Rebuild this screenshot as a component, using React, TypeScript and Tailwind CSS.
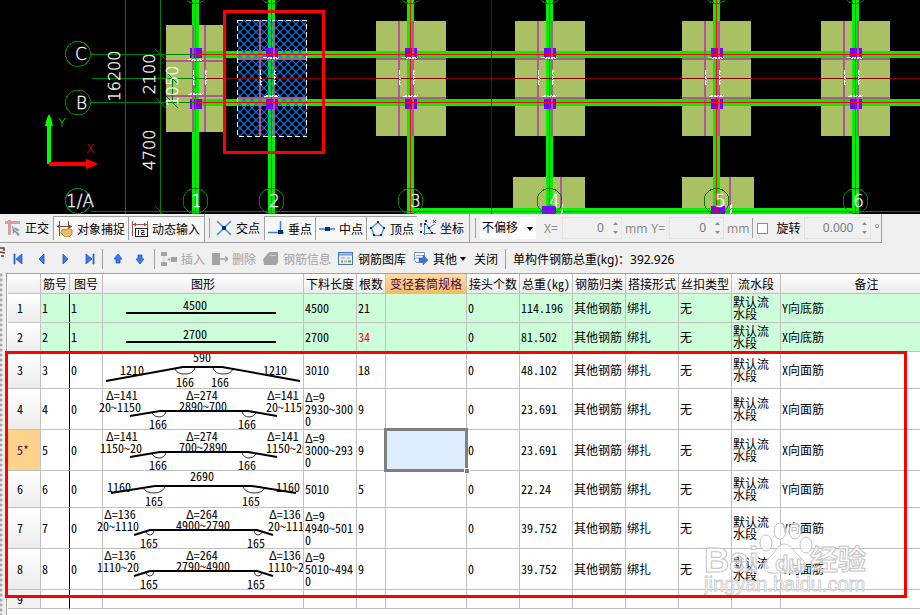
import React from "react";

const GRID_FONT = "font-['Noto_Sans_Mono_CJK_SC','Liberation_Sans','Noto_Sans_CJK_SC',sans-serif]";
const CAD_FONT = "'DejaVu Sans Light','DejaVu Sans',sans-serif";

/* ---------- drawing area ---------- */

const AXES = [
  { n: "1", x: 195, tx: 191, line: "#d83000" },
  { n: "2", x: 271, tx: 269, line: "#e01000" },
  { n: "3", x: 410, tx: 410, line: "#ff0000" },
  { n: "4", x: 549, tx: 549, line: "#008000" },
  { n: "5", x: 716, tx: 715, line: "#ff0000" },
  { n: "6", x: 855, tx: 853, line: "#c02000" },
];

const FOOTINGS = [
  { x: 166, y: 25, w: 59, h: 107, m1: 192, m2: 204, h1: 60, h2: 95, cx: 195 },
  { x: 237, y: 20, w: 70, h: 116, m1: 259, m2: 273, h1: 58, h2: 97, cx: 271 },
  { x: 376, y: 21, w: 70, h: 115, m1: 398, m2: 412, h1: 58, h2: 97, cx: 410 },
  { x: 515, y: 21, w: 70, h: 115, m1: 537, m2: 551, h1: 58, h2: 97, cx: 549 },
  { x: 682, y: 21, w: 69, h: 115, m1: 704, m2: 718, h1: 58, h2: 97, cx: 716 },
  { x: 821, y: 21, w: 69, h: 115, m1: 843, m2: 857, h1: 58, h2: 97, cx: 855 },
];

function SideLabel({ x, y, children }: { x: number; y: number; children: string }) {
  return (
    <text transform={`translate(${x} ${y}) rotate(-90)`} textAnchor="middle" fontSize="16" fontWeight="200" fill="#fff" stroke="#fff" strokeWidth=".3">
      {children}
    </text>
  );
}

function PlanView() {
  return (
    <svg className="block h-[214px] w-full shrink-0 bg-black" fontFamily={CAD_FONT} shapeRendering="crispEdges" role="img" aria-label="基础平面图">
      <defs>
        <pattern id="hatch" width="8" height="8" patternUnits="userSpaceOnUse">
          <path d="M-1 -1L9 9M9 -1L-1 9" stroke="#0a78f0" strokeWidth="1.200" fill="none" shapeRendering="auto" />
        </pattern>
      </defs>
      {FOOTINGS.map((f, i) => (
        <rect key={f.x} x={f.x} y={f.y} width={f.w} height={f.h} fill={i === 1 ? "#000" : "#a9c063"} />
      ))}
      <rect x="513" y="177" width="72" height="37" fill="#a9c063" />
      <rect x="682" y="177" width="72" height="37" fill="#a9c063" />
      <rect x="560" y="177" width="2" height="37" fill="#b0549c" />
      <rect x="729" y="177" width="2" height="37" fill="#b0549c" />
      {AXES.map((a) => (
        <rect key={a.n} x={a.x - 3} y="0" width="7" height="214" fill="#00f000" />
      ))}
      <rect x="196" y="51" width="100%" height="7" fill="#00f000" />
      <rect x="196" y="99" width="100%" height="7" fill="#00f000" />
      <rect x="411" y="208" width="448" height="6" fill="#00f000" />
      <rect x="237" y="20" width="70" height="116" fill="url(#hatch)" />
      {FOOTINGS.map((f, i) => (
        <g key={f.x}>
          <rect x={f.cx - 5} y="48" width="12" height="10" fill="#7800ff" />
          <rect x={f.cx - 5} y="99" width="12" height="10" fill="#7800ff" />
          <rect x={f.m1} y={f.y} width="2" height={f.h} fill="#b0549c" />
          <rect x={f.m2} y={f.y} width="2" height={f.h} fill="#b0549c" />
          <rect x={f.x} y={f.h1} width={f.w} height="2" fill="#b0549c" />
          <rect x={f.x} y={f.h2} width={f.w} height="2" fill="#b0549c" />
          {i === 1 && <rect x="237.5" y="20.5" width="69" height="116" fill="none" stroke="#fff" strokeDasharray="5 3" />}
        </g>
      ))}
      <rect x="542" y="206" width="14" height="8" fill="#7800ff" />
      <rect x="711" y="206" width="14" height="8" fill="#7800ff" />

      {AXES.map((a) => (
        <rect key={a.n} x={a.x} y="0" width="1" height="214" fill={a.line} />
      ))}
      <g fill="#008000">
        <rect x="125" y="0" width="1" height="214" />
        <rect x="160" y="0" width="1" height="214" />
        <rect x="91" y="54" width="105" height="1" />
        <rect x="92" y="78" width="113" height="1" />
        <rect x="91" y="102" width="105" height="1" />
        <rect x="91" y="211" width="105" height="1" />
      </g>
      <rect x="205" y="78" width="100%" height="1" fill="#800000" />
      <rect x="491" y="0" width="1" height="214" fill="#800000" />
      <rect x="196" y="54" width="100%" height="1" fill="#f00" />
      <rect x="196" y="102" width="100%" height="1" fill="#f00" />
      <rect x="196" y="211" width="100%" height="1" fill="#f00" />

      {FOOTINGS.map((f) => (
        <g key={f.x} stroke="#fff" fill="none">
          <path d={`M${f.cx - 8} ${f.h1 - 0.5}h16M${f.cx - 7} ${f.h2 - 0.5}h15`} strokeDasharray="4 1" />
          <path d={`M${f.cx - 4} ${f.h1 + 0.5}h11M${f.cx - 5} ${f.h2 - 1.5}h13`} strokeDasharray="2 1" />
          <path d={`M${f.m1 + 1.5} 70v16M${f.m2 + 1.5} 70v16`} strokeDasharray="5 1 3 1" />
          <path d={`M${f.m1 + 2.5} 78v8M${f.m2 + 2.5} 71v15`} strokeDasharray="1 2" />
        </g>
      ))}
      <path d="M561.5 210v4M562.5 204v10M730.5 205v9M731.5 204v10" stroke="#fff" strokeDasharray="4 1" />

      <g fill="none" stroke="#008000" strokeWidth="1">
        <circle cx="78" cy="54" r="12.5" />
        <circle cx="78" cy="102.500" r="12.5" />
        <circle cx="78" cy="201" r="12.5" />
        {AXES.map((a) => (
          <g key={a.n}>
            <circle cx={a.x + 0.5} cy="201" r="12.5" />
            <circle cx={a.x + 0.5} cy="-9" r="12.5" />
          </g>
        ))}
        <path d="M155 49l11 11M156 98l10 10M155 206l10 10M172.500 78v24M166 72l12 12M166 96l12 12" />
      </g>

      <g fontSize="17" fontWeight="200" fill="#fff" stroke="#fff" strokeWidth=".3">
        <text x="75" y="60">C</text>
        <text x="76" y="109">B</text>
        <text x="66" y="207">1/A</text>
        {AXES.map((a) => (
          <text key={a.n} x={a.tx} y="207">{a.n}</text>
        ))}
      </g>
      <SideLabel x={120} y={76}>16200</SideLabel>
      <SideLabel x={155} y={74}>2100</SideLabel>
      <SideLabel x={155} y={150}>4700</SideLabel>
      <SideLabel x={178} y={86}>1050</SideLabel>

      <g shapeRendering="auto">
        <path d="M47 164V126h-2l2-8 2-4 2 4 2 8h-2v38z" fill="#0f0" />
        <path d="M49 162h37v-3l8 3 4 2-4 2-8 3v-3H49z" fill="#f00" />
      </g>
      <text x="58" y="127" fontSize="13" fontWeight="200" fill="#0f0">Y</text>
      <text x="86" y="153" fontSize="13" fontWeight="200" fill="#f00">X</text>

      <rect x="224.5" y="11.5" width="99" height="141" fill="none" stroke="#f00" strokeWidth="3" />
    </svg>
  );
}

/* ---------- icons ---------- */

function Icon({ children, w = 16 }: { children: React.ReactNode; w?: number }) {
  return (
    <svg width={w} height="16" viewBox={`0 0 ${w} 16`} fill="none" className="shrink-0" aria-hidden="true">
      {children}
    </svg>
  );
}

const OrthoIcon = () => (
  <Icon>
    <path d="M0 2.500h15M4.500 0v15" stroke="#dc9c9c" strokeWidth="3" />
    <path d="M7 6l8 4-3 1 3 4-2 1-3-4-2 2z" fill="#8898ac" />
    <path d="M8 7l4 5" stroke="#d5dde6" />
  </Icon>
);
const SnapIcon = () => (
  <Icon>
    <path d="M2.500 0v15M11.500 0v8M0 5.500h15" stroke="#8a4444" />
    <path d="M0 5.500l3-2v4zM15 5.500l-3-2v4z" fill="#8a4444" />
    <path d="M5 9l2-1 2 1 3-2 3 2v4l-3 3H8l-4-4z" fill="#e8c060" stroke="#b08a30" />
  </Icon>
);
const DynIcon = () => (
  <Icon>
    <path d="M.5 0v15M15.500 0v7M1 3.500h14" stroke="#a05050" />
    <path d="M1 3.500l3-2v4zM15 3.500l-3-2v4z" fill="#a05050" />
    <rect x="3.500" y="7.500" width="12" height="8" fill="#fff" stroke="#222" />
    <path d="M6.500 9v5M9 9.500h3v2H9.500v2H13" stroke="#222" />
  </Icon>
);
const CrossIcon = () => (
  <Icon>
    <path d="M1 1l14 14M15 1L1 15" stroke="#4a8fd8" strokeWidth="1.500" />
    <rect x="6" y="6" width="4" height="4" fill="#003380" />
  </Icon>
);
const PerpIcon = () => (
  <Icon>
    <path d="M0 11.500h16M12.500 0v12" stroke="#3b7fd0" strokeWidth="1.500" />
    <rect x="10" y="9" width="5" height="4" fill="#003380" />
  </Icon>
);
const MidIcon = () => (
  <Icon>
    <path d="M0 8h16" stroke="#3b7fd0" strokeWidth="1.500" />
    <rect x="6" y="6" width="5" height="4" fill="#003380" />
  </Icon>
);
const VertexIcon = () => (
  <Icon>
    <path d="M8 1.500l6 5.500-3 7.500H4L1.500 7z" stroke="#5a9ade" strokeWidth="1.500" />
    <path d="M7 0h2v2H7zM13 6h2v2h-2zM10 13h2v2h-2zM3 13h2v2H3zM0 6h2v2H0z" fill="#003380" />
  </Icon>
);
const CoordIcon = () => (
  <Icon>
    <path d="M4.500 4v11M3 13.500h13M6 4l3 4 6-4M9 8l3 5" stroke="#3b7fd0" />
    <path d="M5 0l2 2M7 0L5 2M13 0l3 3M16 0l-3 3M0 3l1 2 1-2M1 5v2M0 11l2 2M2 11l-2 2" stroke="#333" />
    <path d="M8 7h2v2H8zM11 12h2v2h-2zM4 3h2v2H4z" fill="#003380" />
  </Icon>
);
const InsertIcon = () => (
  <Icon>
    <path d="M0 1h6v4H0zM0 11h6v4H0zM10 6h6v5h-6z" fill="#a3a3a3" />
    <path d="M3 5.500v5" stroke="#a3a3a3" strokeDasharray="1 1" />
    <path d="M7 8.500h4M9 6.500l-2 2 2 2" stroke="#a3a3a3" />
  </Icon>
);
const DeleteIcon = () => (
  <Icon>
    <path d="M0 2h8v12H0z" fill="#a3a3a3" />
    <path d="M6 8h9M13 5.500L16 8l-3 2.500" stroke="#a3a3a3" strokeWidth="1.500" />
  </Icon>
);
const InfoIcon = () => (
  <Icon>
    <path d="M4 3l3-2h8v11l-2 2H1V8z" fill="#a3a3a3" />
    <path d="M0 8l3-3v8H1z" fill="#a3a3a3" />
    <path d="M7 4.500h6" stroke="#d0d0d0" />
  </Icon>
);
const LibraryIcon = () => (
  <Icon>
    <rect x=".5" y="1.500" width="14" height="12" fill="#e8f1fb" stroke="#4a78b0" />
    <path d="M1 3.500h13" stroke="#6fa2da" strokeWidth="2" />
    <path d="M3 7h4M9 7h3" stroke="#8aa8cc" />
    <path d="M3 10.500h2" stroke="#e07848" strokeWidth="2" />
    <path d="M6 10.500h3" stroke="#e0b040" strokeWidth="2" />
    <path d="M10 10.500h3" stroke="#58a858" strokeWidth="2" />
  </Icon>
);
const OtherIcon = () => (
  <Icon>
    <path d="M1.500 1.500h10v10h-8l-2-2z" fill="#f4f8fc" stroke="#6d8fb8" />
    <path d="M3 4.500h7M3 7h4" stroke="#8aa8cc" />
    <path d="M6 7h4V4l5 5-5 5v-3H6z" fill="#3c78dc" stroke="#2858a8" strokeWidth=".5" />
  </Icon>
);

function NavIcon({ d }: { d: string }) {
  return (
    <svg width="10" height="12" viewBox="0 0 10 12" aria-hidden="true">
      <path d={d} fill="#3b7ae8" stroke="#1d56c0" strokeWidth=".8" />
    </svg>
  );
}

/* ---------- toolbars ---------- */

function ToolButton({ icon, label, className = "", pressed = false }: { icon: React.ReactNode; label: string; className?: string; pressed?: boolean }) {
  return (
    <button
      type="button"
      aria-pressed={pressed}
      className={`flex h-6 shrink-0 items-center gap-1 whitespace-nowrap ${pressed ? "border-t border-l border-[#a0a0a0] bg-[#f8f8f8] pl-[3px]" : ""} ${className}`}
    >
      {icon}
      <span className="pt-[2px]">{label}</span>
    </button>
  );
}

const Rule = ({ className = "" }: { className?: string }) => <div className={`w-px shrink-0 self-stretch bg-[#a0a0a0] ${className}`} />;

function Spin({ id, label, value, unit, inputClass }: { id: string; label?: string; value: string; unit: string; inputClass: string }) {
  return (
    <div className="flex items-center text-[#8c8c8c]">
      {label && <label htmlFor={id} className="mr-1 pt-[2px]">{label}</label>}
      <div className="flex h-[22px] items-center border border-[#e4e4e4] bg-[#f1f1f1]">
        <input id={id} aria-label={label ? undefined : "旋转角度"} disabled defaultValue={value} className={`bg-transparent text-right text-[#7a7a7a] ${inputClass}`} />
        <svg width="7" height="14" viewBox="0 0 7 14" className="mr-[2px] ml-2" aria-hidden="true">
          <path d="M1 4l2.500-3L6 4zM1 10l2.500 3L6 10z" fill="#8c8c8c" />
        </svg>
      </div>
      <span className="ml-[3px] pt-[2px]">{unit}</span>
    </div>
  );
}

function SnapBar() {
  return (
    <div className="flex h-[29px] w-fit shrink-0 items-center border-r border-b border-[#a0a0a0] pr-px pl-[5px]">
      <ToolButton icon={<OrthoIcon />} label="正交" className="w-12" />
      <ToolButton pressed icon={<SnapIcon />} label="对象捕捉" className="w-[75px]" />
      <ToolButton pressed icon={<DynIcon />} label="动态输入" className="w-[76px]" />
      <Rule className="mr-1" />
      <Rule className="my-1 mr-[6px]" />
      <ToolButton icon={<CrossIcon />} label="交点" className="w-12" />
      <ToolButton pressed icon={<PerpIcon />} label="垂点" className="w-[51px]" />
      <ToolButton pressed icon={<MidIcon />} label="中点" className="w-[51px]" />
      <ToolButton pressed icon={<VertexIcon />} label="顶点" className="w-[51px]" />
      <ToolButton icon={<CoordIcon />} label="坐标" className="ml-[3px] w-[49px]" />
      <Rule className="mr-[5px]" />
      <Rule className="my-1 mr-1" />
      <div className="relative">
        <select aria-label="偏移方式" defaultValue="不偏移" className="h-[22px] w-14 appearance-none bg-white pl-[2px]">
          <option>不偏移</option>
        </select>
        <svg width="6" height="4" viewBox="0 0 6 4" className="pointer-events-none absolute top-[10px] right-[3px]" aria-hidden="true">
          <path d="M0 0h6L3 4z" fill="#000" />
        </svg>
      </div>
      <div className="ml-2">
        <Spin id="dx" label="X=" value="0" unit="mm" inputClass="w-[41px]" />
      </div>
      <div className="ml-1">
        <Spin id="dy" label="Y=" value="0" unit="mm" inputClass="w-9" />
      </div>
      <Rule className="mx-[3px] my-1" />
      <input id="rotate" type="checkbox" className="ml-px h-[11px] w-[11px] appearance-none border border-[#8c8c8c] bg-white" />
      <label htmlFor="rotate" className="mr-1 ml-2 pt-[2px]">旋转</label>
      <Spin id="angle" value="0.000" unit="°" inputClass="w-12" />
    </div>
  );
}

function RebarBar() {
  return (
    <div className="flex h-[30px] shrink-0 items-center whitespace-nowrap pt-[2px]">
      <svg width="6" height="12" viewBox="0 0 6 12" className="mb-3" aria-hidden="true">
        <path d="M0 1h4v3M0 5l5 1M1 9h3" stroke="#7a3038" strokeWidth="1.500" fill="none" />
      </svg>
      <div className="ml-[7px] flex items-center gap-[14px]">
        <button type="button" aria-label="首条"><NavIcon d="M1 1h1v10H1zM9 1v10L3 6z" /></button>
        <button type="button" aria-label="上一条"><NavIcon d="M7 1v10L2 6z" /></button>
        <button type="button" aria-label="下一条"><NavIcon d="M2 1v10l5-5z" /></button>
        <button type="button" aria-label="末条"><NavIcon d="M1 1v10l6-5zM8 1h1v10H8z" /></button>
      </div>
      <Rule className="mr-[10px] ml-[7px] my-1" />
      <button type="button" aria-label="上移"><NavIcon d="M5 1l4 5H7v4H3V6H1z" /></button>
      <button type="button" aria-label="下移" className="ml-3"><NavIcon d="M3 2h4v4h2l-4 5-4-5h2z" /></button>
      <Rule className="mr-[6px] ml-[9px] my-1" />
      <div className="flex text-[#a3a3a3]">
        <ToolButton icon={<InsertIcon />} label="插入" className="w-[51px]" />
        <ToolButton icon={<DeleteIcon />} label="删除" className="w-[51px]" />
        <ToolButton icon={<InfoIcon />} label="钢筋信息" className="w-[75px]" />
      </div>
      <ToolButton icon={<LibraryIcon />} label="钢筋图库" className="w-[75px]" />
      <ToolButton icon={<OtherIcon />} label="其他" />
      <svg width="6" height="4" viewBox="0 0 6 4" className="ml-[3px]" aria-hidden="true">
        <path d="M0 0h6L3 4z" fill="#000" />
      </svg>
      <button type="button" className="ml-2 pt-[2px]">关闭</button>
      <Rule className="mr-[7px] ml-[7px] my-1" />
      <span className="pt-[2px]">单构件钢筋总重(kg)：392.926</span>
    </div>
  );
}

/* ---------- bar shapes ---------- */

type Label = [number, number, string];
type Shape = { h: number; line: string; arcs?: string; starts?: Label[]; mids?: Label[] };

function BarShape({ h, line, arcs, starts = [], mids = [] }: Shape) {
  return (
    <svg height={h} className="block w-[200px] overflow-visible [clip-path:inset(0_0_0_-8px)]" fontSize="12">
      {starts.map(([x, y, s], i) => <text key={i} x={x} y={y}>{s}</text>)}
      {mids.map(([x, y, s], i) => <text key={i} x={x} y={y} textAnchor="middle">{s}</text>)}
      {arcs && <path d={arcs} fill="none" stroke="#333" strokeWidth="1" />}
      <path d={line} fill="none" stroke="#000" strokeWidth="2" />
    </svg>
  );
}

const straight = (n: string): Shape => ({ h: 28, line: "M23 19H173", mids: [[92, 16, n]] });

const taperWide = (left: string, mid: string, lx: number): Shape => ({
  h: 40,
  line: "M27 27L57 22H145L174 27",
  arcs: "M49 24q2 4 7 4t7-5M139 23q2 5 7 5t7-4",
  starts: [[3, 11, "Δ=141"], [lx, 23, left], [83, 11, "Δ=274"], [164, 11, "Δ=141"], [163, 23, left]],
  mids: [[100, 22, mid], [55, 40, "166"], [144, 40, "166"]],
});

const taperNarrow = (left: string, mid: string): Shape => ({
  h: 40,
  line: "M31 27L47 22H154L170 27",
  arcs: "M43 24q1 3 4 3t4-4M151 23q1 4 4 4t4-3",
  starts: [[1, 11, "Δ=136"], [-6, 23, left], [83, 11, "Δ=264"], [166, 11, "Δ=136"], [165, 23, left]],
  mids: [[100, 22, mid], [46, 40, "165"], [153, 40, "165"]],
});

type Row = { no: string; fig: string; shape: Shape; len: string[]; qty: string; kg: string; note: string; cls: string; green?: boolean };

const ROWS: Row[] = [
  { no: "1", fig: "1", shape: straight("4500"), len: ["4500"], qty: "21", kg: "114.196", note: "Y向底筋", cls: "h-[29px]", green: true },
  { no: "2", fig: "1", shape: straight("2700"), len: ["2700"], qty: "34", kg: "81.502", note: "X向底筋", cls: "h-[29px]", green: true },
  {
    no: "3", fig: "0", len: ["3010"], qty: "18", kg: "48.102", note: "X向面筋", cls: "h-[37px]",
    shape: {
      h: 36, line: "M3 29L80 15H119L197 29", arcs: "M72 17q2 5 10 5t10-6M110 16q2 6 10 6t10-5",
      starts: [[17, 23, "1210"], [160, 23, "1210"]], mids: [[99, 10, "590"], [82, 35, "166"], [117, 35, "166"]],
    },
  },
  { no: "4", fig: "0", shape: taperWide("20~1150", "2890~700", -4), len: ["Δ=9", "2930~300", "0"], qty: "9", kg: "23.691", note: "X向面筋", cls: "h-[41px]" },
  { no: "5", fig: "0", shape: taperWide("1150~20", "700~2890", -3), len: ["Δ=9", "3000~293", "0"], qty: "9", kg: "23.691", note: "X向面筋", cls: "h-[41px]" },
  {
    no: "6", fig: "0", len: ["5010"], qty: "5", kg: "22.24", note: "Y向面筋", cls: "h-[37px]",
    shape: {
      h: 36, line: "M8 22L52 15H149L193 22", arcs: "M40 17q3 5 11 5t11-6M140 16q3 6 11 6t11-5",
      starts: [[4, 21, "1160"], [173, 21, "1160"]], mids: [[99, 10, "2690"], [51, 35, "165"], [148, 35, "165"]],
    },
  },
  { no: "7", fig: "0", shape: taperNarrow("20~1110", "4900~2790"), len: ["Δ=9", "4940~501", "0"], qty: "9", kg: "39.752", note: "Y向面筋", cls: "h-[41px]" },
  { no: "8", fig: "0", shape: taperNarrow("1110~20", "2790~4900"), len: ["Δ=9", "5010~494", "0"], qty: "9", kg: "39.752", note: "Y向面筋", cls: "h-[41px]" },
];

const HEADS = ["", "筋号", "图号", "图形", "下料长度", "根数", "变径套筒规格", "接头个数", "总重(kg)", "钢筋归类", "搭接形式", "丝扣类型", "流水段", "备注"];
const COLS = ["w-[33px]", "w-[29px]", "w-[33px]", "w-[201px]", "w-[53px]", "w-[29px]", "w-[81px]", "w-[53px]", "w-[53px]", "w-[53px]", "w-[53px]", "w-[53px]", "w-[49px]", ""];

function Cell({ children, className = "" }: { children?: React.ReactNode; className?: string }) {
  return <td className={`border-r border-b border-[#c0c0c0] p-0 pl-px align-middle ${className}`}>{children}</td>;
}

function RebarTable() {
  return (
    <table className={`w-full table-fixed border-separate border-spacing-0 text-left text-xs leading-3 ${GRID_FONT}`}>
      <colgroup>
        {COLS.map((c, i) => <col key={i} className={c} />)}
      </colgroup>
      <thead>
        <tr className="h-5">
          {HEADS.map((h, i) => (
            <th
              key={i}
              scope="col"
              className={`overflow-hidden border-b border-[#c0c0c0] p-0 text-center font-normal whitespace-nowrap ${i < 13 ? "border-r" : "pl-8"} ${
                h === "变径套筒规格" ? "bg-linear-to-b from-[#fddca6] to-[#f3bf62] text-[#500050]" : "bg-linear-to-b from-white to-[#ececec]"
              }`}
            >
              {h}
            </th>
          ))}
        </tr>
      </thead>
      <tbody>
        {ROWS.map((r) => (
          <tr key={r.no} className={`${r.cls} ${r.green ? "bg-[#ccffd9]" : "bg-white"}`}>
            <th
              scope="row"
              className={`border-r border-b border-[#c0c0c0] p-0 pl-[9px] text-left font-normal ${r.no === "5" ? "bg-[#ffd38c] text-[#500050]" : "bg-linear-to-b from-white to-[#ececec]"}`}
            >
              {r.no === "5" ? "5*" : r.no}
            </th>
            <Cell className="border-r-black">{r.no}</Cell>
            <Cell>{r.fig}</Cell>
            <td className="border-r border-b border-[#c0c0c0] p-0"><BarShape {...r.shape} /></td>
            <Cell className="whitespace-nowrap">{r.len.map((l) => <div key={l}>{l}</div>)}</Cell>
            <Cell className={r.qty === "34" ? "text-[#f00]" : ""}>{r.qty}</Cell>
            {r.no === "5" ? (
              <Cell className="relative bg-[#dfeeff]">
                <div className="absolute -inset-[2px] border-3 border-[#808080]" />
                <div className="absolute -right-[4px] -bottom-[4px] h-[6px] w-[6px] border border-white bg-[#808080]" />
              </Cell>
            ) : (
              <Cell />
            )}
            <Cell>0</Cell>
            <Cell>{r.kg}</Cell>
            <Cell className="whitespace-nowrap">其他钢筋</Cell>
            <Cell>绑扎</Cell>
            <Cell>无</Cell>
            <Cell className="pr-2">默认流水段</Cell>
            <Cell className="border-r-0">{r.note}</Cell>
          </tr>
        ))}
        <tr className="h-[19px]">
          <th scope="row" className="border-r border-b border-[#c0c0c0] bg-[#f2f2f2] p-0 pl-[9px] text-left font-normal">9</th>
          {COLS.slice(1).map((_, i) => (
            <Cell key={i} className={i === 0 ? "border-r-black" : i === 12 ? "border-r-0" : ""} />
          ))}
        </tr>
      </tbody>
    </table>
  );
}

function Watermark() {
  return (
    <svg width="174" height="84" viewBox="0 0 174 84" className="pointer-events-none absolute top-[238px] right-[42px]" aria-hidden="true" fontFamily="'Liberation Sans','Noto Sans CJK SC',sans-serif">
      <g fill="#fff" fillOpacity=".7" stroke="#c4c4c4" strokeWidth="1">
        <text x="0" y="60" fontSize="35" fontWeight="700">Bai</text>
        <ellipse cx="62" cy="31" rx="6" ry="8" />
        <ellipse cx="76" cy="19" rx="6" ry="8" />
        <ellipse cx="91" cy="19" rx="6" ry="8" />
        <ellipse cx="102" cy="33" rx="6" ry="8" />
        <path d="M80 32c8 0 11 10 18 15 6 5 5 14-4 14H68c-9 0-10-9-4-14 7-5 9-15 16-15z" />
        <text x="71" y="59" fontSize="22" fontWeight="700">du</text>
        <text x="106" y="58" fontSize="28" fontWeight="700" fontFamily="'Noto Sans CJK SC',sans-serif">经验</text>
      </g>
      <text x="0" y="79" fontSize="20" fill="#fff" fillOpacity=".8" stroke="#c8c8c8" strokeWidth=".8">jingyan.baidu.com</text>
    </svg>
  );
}

export default function App() {
  return (
    <div className="flex h-screen flex-col overflow-hidden bg-[#f0f0f0] font-['Noto_Sans','Noto_Sans_CJK_SC',sans-serif] text-xs text-black">
      <PlanView />
      <SnapBar />
      <RebarBar />
      <div className="flex min-h-0 flex-1">
        <div className="w-[6px] shrink-0 bg-[radial-gradient(circle_at_1px_2px,#a8a8a8_1px,transparent_2px)] bg-[size:6px_5px]" />
        <div className="relative min-w-0 flex-1 border-t border-l border-[#a0a0a0] bg-white pl-px">
          <RebarTable />
          <Watermark />
          <div className="pointer-events-none absolute top-[77px] right-[13px] -left-[2px] h-[247px] border-3 border-[#f00]" />
        </div>
      </div>
    </div>
  );
}
